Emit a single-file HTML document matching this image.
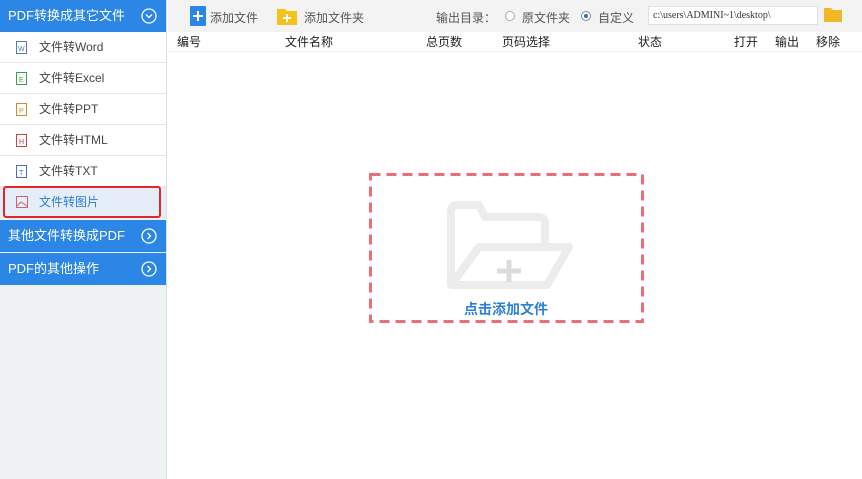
<!DOCTYPE html>
<html><head><meta charset="utf-8"><style>
*{margin:0;padding:0;box-sizing:border-box}
body{width:862px;height:479px;overflow:hidden;background:#fff;font-family:"Liberation Sans","Noto Sans CJK SC",sans-serif;font-size:12px;color:#333;position:relative}
#side{position:absolute;left:0;top:0;width:167px;height:479px;background:#eff2f2;border-right:1px solid #dde0e0}
.blue{position:absolute;left:0;width:166px;height:32px;background:#2b86e6;color:#fff;font-size:13px;line-height:32px;padding-left:8px}
.blue svg{position:absolute;right:9px;top:8px}
.item{position:absolute;left:0;width:166px;height:31px;background:#fff;border-bottom:1px solid #e6e6e6;line-height:30px;padding-left:39px;color:#444}
.item svg{position:absolute;left:16px;top:9px}
.sel{background:#e4edf8;color:#2b7fd8}
#redbox{position:absolute;left:3px;top:186px;width:158px;height:32px;border:2px solid #e0282a;border-radius:3px}
#tool{position:absolute;left:168px;top:0;right:0;height:32px;background:#f3f3f3}
#thead{position:absolute;left:168px;top:32px;right:0;height:20px;line-height:20px;font-size:12px;color:#222;border-bottom:1px solid #eee}
#thead span{position:absolute}
#drop{position:absolute;left:369px;top:173px;width:275px;height:150px}
</style></head><body>
<div id="side">
<div class="blue" style="top:0">PDF转换成其它文件<svg width="16" height="16"><circle cx="8" cy="8" r="7" fill="none" stroke="#fff" stroke-width="1.3"/><path d="M5 6.5l3 3 3-3" fill="none" stroke="#fff" stroke-width="1.3"/></svg></div>
<div class="item" style="top:32px"><svg width="11" height="13"><rect x=".5" y=".5" width="10" height="12" fill="none" stroke="#4a7cc4"/><text x="2" y="10" font-size="7" fill="#4a7cc4">W</text></svg>文件转Word</div>
<div class="item" style="top:63px"><svg width="11" height="13"><rect x=".5" y=".5" width="10" height="12" fill="none" stroke="#3aa04a"/><text x="3" y="10" font-size="7" fill="#3aa04a">E</text></svg>文件转Excel</div>
<div class="item" style="top:94px"><svg width="11" height="13"><rect x=".5" y=".5" width="10" height="12" fill="none" stroke="#d08a30"/><text x="3" y="10" font-size="7" fill="#d08a30">P</text></svg>文件转PPT</div>
<div class="item" style="top:125px"><svg width="11" height="13"><rect x=".5" y=".5" width="10" height="12" fill="none" stroke="#d04040"/><text x="3" y="10" font-size="7" fill="#d04040">H</text></svg>文件转HTML</div>
<div class="item" style="top:156px"><svg width="11" height="13"><rect x=".5" y=".5" width="10" height="12" fill="none" stroke="#4a6cc4"/><text x="3" y="10" font-size="7" fill="#4a6cc4">T</text></svg>文件转TXT</div>
<div class="item sel" style="top:187px"><svg width="12" height="12"><rect x=".5" y=".5" width="11" height="11" fill="none" stroke="#d06070"/><path d="M1 10 L5 6 L11 10" stroke="#d06070" fill="none"/></svg>文件转图片</div>
<div class="blue" style="top:220px">其他文件转换成PDF<svg width="16" height="16"><circle cx="8" cy="8" r="7" fill="none" stroke="#fff" stroke-width="1.3"/><path d="M6.5 5l3 3-3 3" fill="none" stroke="#fff" stroke-width="1.3"/></svg></div>
<div class="blue" style="top:253px">PDF的其他操作<svg width="16" height="16"><circle cx="8" cy="8" r="7" fill="none" stroke="#fff" stroke-width="1.3"/><path d="M6.5 5l3 3-3 3" fill="none" stroke="#fff" stroke-width="1.3"/></svg></div>
</div>
<div id="redbox"></div>
<div id="tool">
<svg style="position:absolute;left:22px;top:6px" width="16" height="20"><rect width="16" height="20" rx="1" fill="#2b86e6"/><path d="M8 5v10M3 10h10" stroke="#fff" stroke-width="2"/></svg>
<span style="position:absolute;left:42px;top:9px;color:#555">添加文件</span>
<svg style="position:absolute;left:109px;top:7px" width="20" height="18"><path d="M0 2h8l2 2h10v14H0z" fill="#f5c21b"/><path d="M10 7v8M6 11h8" stroke="#fff" stroke-width="2"/></svg>
<span style="position:absolute;left:136px;top:9px;color:#555">添加文件夹</span>
<span style="position:absolute;left:268px;top:9px;color:#555">输出目录：</span>
<span style="position:absolute;left:337px;top:11px;width:10px;height:10px;border:1px solid #aaa;border-radius:50%;background:#fff"></span>
<span style="position:absolute;left:354px;top:9px;color:#555">原文件夹</span>
<span style="position:absolute;left:413px;top:11px;width:10px;height:10px;border:1px solid #888;border-radius:50%;background:#fff"><span style="position:absolute;left:2px;top:2px;width:4px;height:4px;border-radius:50%;background:#2b6cc4"></span></span>
<span style="position:absolute;left:430px;top:9px;color:#555">自定义</span>
<div style="position:absolute;left:480px;top:6px;width:170px;height:19px;background:#fff;border:1px solid #e2e2e2;font-family:'Liberation Serif',serif;font-size:10px;line-height:17px;padding-left:4px">c:\users\ADMINI~1\desktop\</div>
<svg style="position:absolute;left:656px;top:7px" width="18" height="15"><path d="M0 1h7l2 2h9v12H0z" fill="#f0b826"/></svg>
</div>
<div id="thead">
<span style="left:9px">编号</span><span style="left:117px">文件名称</span><span style="left:258px">总页数</span><span style="left:334px">页码选择</span><span style="left:470px">状态</span><span style="left:566px">打开</span><span style="left:607px">输出</span><span style="left:648px">移除</span>
</div>
<svg id="drop" width="275" height="150">
<rect x="1.5" y="1.5" width="272" height="147" fill="none" stroke="#e8707a" stroke-width="3" stroke-dasharray="10,6"/>
<path d="M82 112 V38 a6 6 0 0 1 6-6 H110 l6 12 H170 a6 6 0 0 1 6 6 V70" fill="none" stroke="#ececec" stroke-width="8" stroke-linejoin="round"/>
<path d="M82 112 L110 74 H200 L178 112 Z" fill="none" stroke="#ececec" stroke-width="8" stroke-linejoin="round"/>
<path d="M140 87v22M128 98h24" stroke="#dcdcdc" stroke-width="5"/>
<text x="137" y="141" text-anchor="middle" font-size="14" font-weight="bold" fill="#2b7fd8" font-family="Liberation Sans,Noto Sans CJK SC,sans-serif">点击添加文件</text>
</svg>
</body></html>
